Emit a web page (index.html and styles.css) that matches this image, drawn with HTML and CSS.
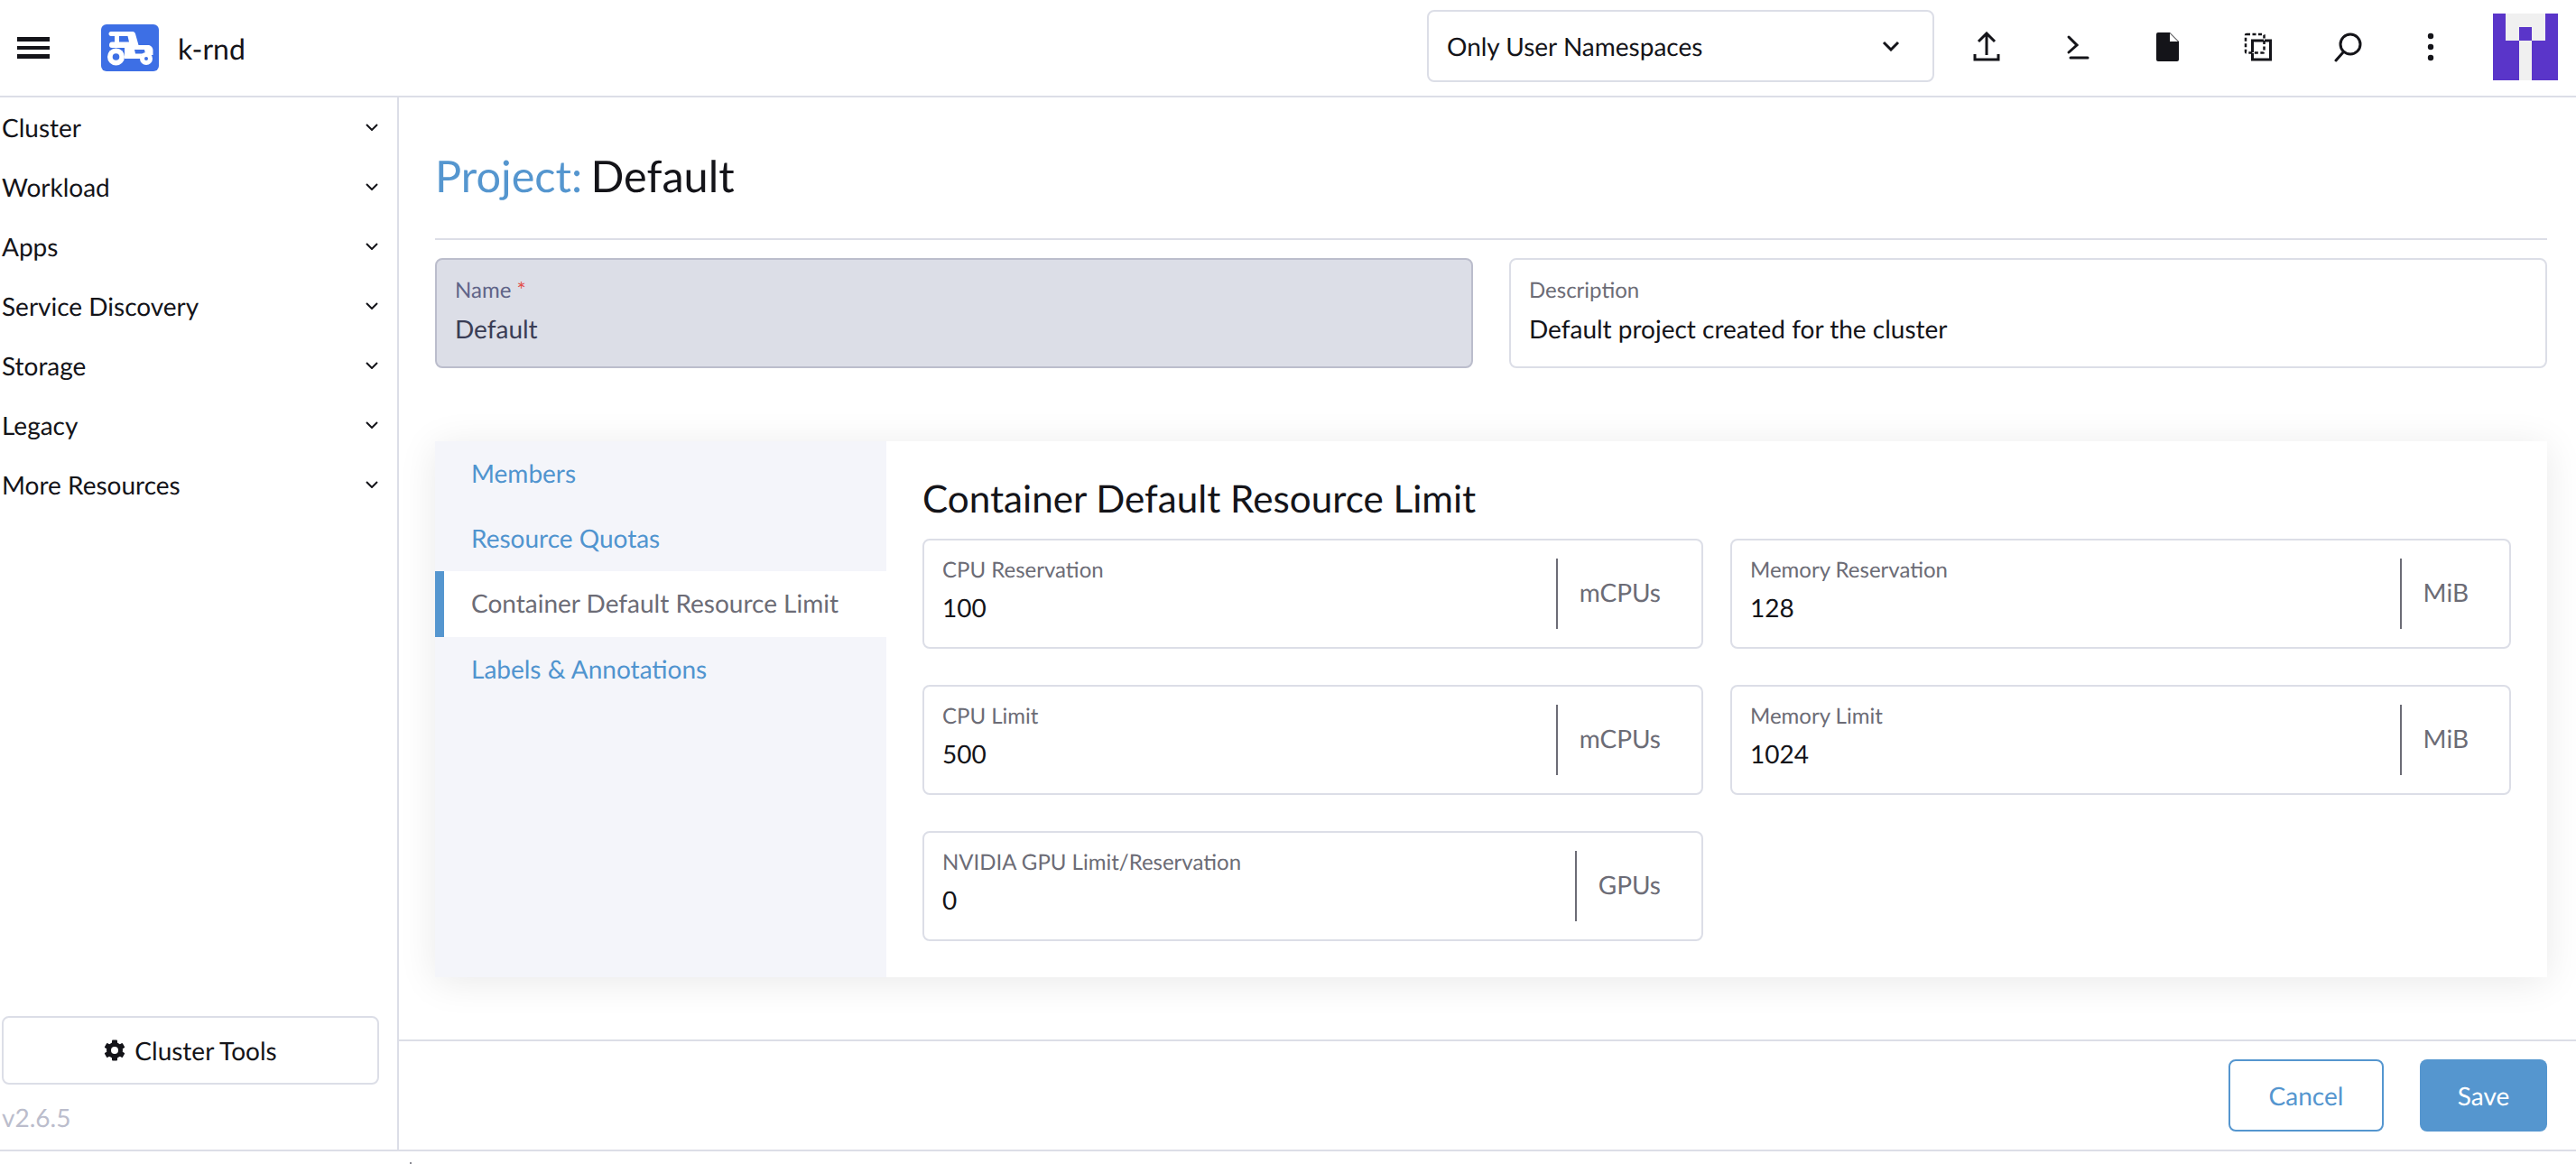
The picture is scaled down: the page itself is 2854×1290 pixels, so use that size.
FILE: index.html
```html
<!DOCTYPE html>
<html lang="en">

<head>
    <meta charset="UTF-8">
    <meta name="viewport" content="width=device-width, initial-scale=1.0">
    <title>Project: Default</title>
    <link rel="stylesheet" href="styles.css">
</head>

<body>
    <div class="app">
        <header class="topbar">
            <div class="brand">
                <svg class="burger" width="36" height="24" viewBox="0 0 36 24"><path d="M0 0h36v5H0zM0 10h36v4H0zM0 19h36v5H0z" fill="#141419"/></svg>
                <svg class="cluster-logo" width="64" height="52" viewBox="0 0 64 52">
                    <rect width="64" height="52" rx="6" fill="#3d6fe5"/>
                    <path fill-rule="evenodd" d="M11 8h24c1.500 0 2.500 1 3 2.500L41.500 23H52c3 0 5.500 2.500 5.500 5.500V34H44v4H26V26H12c-2 0-3-1-3-3s1-3.500 3-3.500h3V13h-4c-1.500 0-2.500-1-2.500-2.500S9.500 8 11 8zM20 13v6.500h11L29.500 13zM37 28l1 4.500h11l-1-4.500z" fill="#fff"/>
                    <circle cx="16.500" cy="36" r="9.500" fill="#fff"/><circle cx="16.500" cy="36" r="3.800" fill="#3d6fe5"/>
                    <circle cx="50" cy="38" r="7" fill="#fff"/><circle cx="50" cy="38" r="2" fill="#3d6fe5"/>
                </svg>
                <span class="cluster-name">k-rnd</span>
            </div>
            <div class="ns-select">
                <span>Only User Namespaces</span>
                <svg width="20" height="12" viewBox="0 0 20 12"><path d="M2 2l8 8 8-8" fill="none" stroke="#141419" stroke-width="3"/></svg>
            </div>
            <div class="tools">
                <span class="tool"><svg width="32" height="34" viewBox="0 0 32 34"><path d="M16 26V3M7 11l9-9 9 9M3 25v6h26v-6" fill="none" stroke="#141419" stroke-width="3"/></svg></span>
                <span class="tool"><svg width="32" height="34" viewBox="0 0 32 34"><path d="M7 6l9 9-9 8M9 29h19" fill="none" stroke="#141419" stroke-width="3" stroke-linecap="round"/></svg></span>
                <span class="tool"><svg width="32" height="34" viewBox="0 0 32 34"><path d="M6 1h13l10 10v20a2 2 0 0 1-2 2H6a2 2 0 0 1-2-2V3a2 2 0 0 1 2-2z" fill="#141419"/><path d="M19 2v9h9z" fill="#fff"/></svg></span>
                <span class="tool"><svg width="32" height="34" viewBox="0 0 32 34"><rect x="10.500" y="10" width="20" height="21" fill="none" stroke="#141419" stroke-width="3"/><rect x="3" y="3" width="20.500" height="20.500" rx="1" fill="none" stroke="#fff" stroke-width="1"/><rect x="3" y="3" width="20.500" height="20.500" rx="1" fill="none" stroke="#141419" stroke-width="2.500" stroke-dasharray="4 2.500"/></svg></span>
                <span class="tool"><svg width="32" height="34" viewBox="0 0 32 34"><circle cx="19" cy="14" r="11" fill="none" stroke="#141419" stroke-width="3"/><path d="M11 23l-8 9" stroke="#141419" stroke-width="3" stroke-linecap="round"/></svg></span>
                <span class="tool tool-kebab"><svg width="8" height="34" viewBox="0 0 8 34"><circle cx="4" cy="5" r="3.200" fill="#141419"/><circle cx="4" cy="17" r="3.200" fill="#141419"/><circle cx="4" cy="29" r="3.200" fill="#141419"/></svg></span>
            </div>
            <svg class="avatar" width="72" height="74" viewBox="0 0 72 74">
                <rect width="72" height="74" fill="#5a35c9"/>
                <path d="M14 0h44v30H43v44H29V30H14z" fill="#f0f0f0"/>
                <rect x="29" y="15" width="14" height="15" fill="#5a35c9"/>
            </svg>
        </header>

        <aside class="sidebar">
            <nav class="side-nav">
                <div class="nav-item"><span>Cluster</span><svg class="chev" width="14" height="8" viewBox="0 0 14 8"><path d="M1 1l6 6 6-6" fill="none" stroke="#141419" stroke-width="2"/></svg></div>
                <div class="nav-item"><span>Workload</span><svg class="chev" width="14" height="8" viewBox="0 0 14 8"><path d="M1 1l6 6 6-6" fill="none" stroke="#141419" stroke-width="2"/></svg></div>
                <div class="nav-item"><span>Apps</span><svg class="chev" width="14" height="8" viewBox="0 0 14 8"><path d="M1 1l6 6 6-6" fill="none" stroke="#141419" stroke-width="2"/></svg></div>
                <div class="nav-item"><span>Service Discovery</span><svg class="chev" width="14" height="8" viewBox="0 0 14 8"><path d="M1 1l6 6 6-6" fill="none" stroke="#141419" stroke-width="2"/></svg></div>
                <div class="nav-item"><span>Storage</span><svg class="chev" width="14" height="8" viewBox="0 0 14 8"><path d="M1 1l6 6 6-6" fill="none" stroke="#141419" stroke-width="2"/></svg></div>
                <div class="nav-item"><span>Legacy</span><svg class="chev" width="14" height="8" viewBox="0 0 14 8"><path d="M1 1l6 6 6-6" fill="none" stroke="#141419" stroke-width="2"/></svg></div>
                <div class="nav-item"><span>More Resources</span><svg class="chev" width="14" height="8" viewBox="0 0 14 8"><path d="M1 1l6 6 6-6" fill="none" stroke="#141419" stroke-width="2"/></svg></div>
            </nav>
            <div class="side-bottom">
                <button class="tools-btn" type="button">
                    <svg width="24" height="24" viewBox="0 0 24 24">
                        <g fill="#141419">
                            <circle cx="12" cy="12" r="9"/>
                            <rect x="9" y="0.500" width="6" height="23" rx="1"/>
                            <rect x="9" y="0.500" width="6" height="23" rx="1" transform="rotate(60 12 12)"/>
                            <rect x="9" y="0.500" width="6" height="23" rx="1" transform="rotate(120 12 12)"/>
                        </g>
                        <circle cx="12" cy="12" r="4" fill="#fff"/>
                    </svg>
                    Cluster Tools
                </button>
                <div class="version">v2.6.5</div>
            </div>
        </aside>

        <main class="main">
            <div class="content">
                <h1 class="page-title"><span class="title-type">Project:</span> Default</h1>
                <div class="name-row">
                    <div class="field field-disabled">
                        <label class="field-label">Name <span class="req">*</span></label>
                        <div class="field-value">Default</div>
                    </div>
                    <div class="field">
                        <label class="field-label">Description</label>
                        <div class="field-value">Default project created for the cluster</div>
                    </div>
                </div>

                <section class="tabbed">
                    <ul class="tabs">
                        <li class="tab">Members</li>
                        <li class="tab">Resource Quotas</li>
                        <li class="tab tab-active">Container Default Resource Limit</li>
                        <li class="tab">Labels &amp; Annotations</li>
                    </ul>
                    <div class="tab-body">
                        <h3 class="tab-title">Container Default Resource Limit</h3>
                        <div class="limit-grid">
                            <div class="field field-unit">
                                <div class="unit-main">
                                    <label class="field-label">CPU Reservation</label>
                                    <div class="field-value">100</div>
                                </div>
                                <div class="unit">mCPUs</div>
                            </div>
                            <div class="field field-unit">
                                <div class="unit-main">
                                    <label class="field-label">Memory Reservation</label>
                                    <div class="field-value">128</div>
                                </div>
                                <div class="unit">MiB</div>
                            </div>
                            <div class="field field-unit">
                                <div class="unit-main">
                                    <label class="field-label">CPU Limit</label>
                                    <div class="field-value">500</div>
                                </div>
                                <div class="unit">mCPUs</div>
                            </div>
                            <div class="field field-unit">
                                <div class="unit-main">
                                    <label class="field-label">Memory Limit</label>
                                    <div class="field-value">1024</div>
                                </div>
                                <div class="unit">MiB</div>
                            </div>
                            <div class="field field-unit">
                                <div class="unit-main">
                                    <label class="field-label">NVIDIA GPU Limit/Reservation</label>
                                    <div class="field-value">0</div>
                                </div>
                                <div class="unit">GPUs</div>
                            </div>
                        </div>
                    </div>
                </section>
            </div>

            <footer class="actions">
                <button class="btn btn-cancel" type="button">Cancel</button>
                <button class="btn btn-save" type="button">Save</button>
            </footer>
        </main>

        <div class="page-foot"><span class="foot-mark"></span></div>
    </div>
</body>

</html>
```

FILE: styles.css
```css
* {
    box-sizing: border-box;
}

body {
    margin: 0;
    background-color: white;
    color: #141419;
    font-family: Lato, "Open Sans", sans-serif;
    font-size: 28px;
    text-rendering: geometricPrecision;
}

.app {
    display: grid;
    grid-template-columns: 442px 1fr;
    grid-template-rows: 108px 1166px 16px;
    height: 1290px;
    overflow: hidden;
}

/* top bar */
.topbar {
    grid-column: 1 / 3;
    display: flex;
    align-items: center;
    height: 108px;
    border-bottom: 2px solid #dcdee7;
    padding-left: 19px;
    padding-right: 20px;
}

.brand {
    display: flex;
    align-items: center;
    flex: 1;
}

.burger {
    margin-right: 57px;
}

.cluster-logo {
    margin-right: 21px;
}

.cluster-name {
    font-size: 32px;
}

.ns-select {
    display: flex;
    align-items: center;
    justify-content: space-between;
    width: 562px;
    height: 80px;
    margin-top: -4px;
    padding: 0 36px 0 20px;
    border: 2px solid #dcdee7;
    border-radius: 8px;
}

.tools {
    display: flex;
    align-items: center;
    margin-left: 8px;
}

.tool {
    display: flex;
    justify-content: center;
    width: 100px;
    margin-top: -2px;
}

.tool-kebab {
    width: 80px;
    padding-left: 4px;
}

.avatar {
    margin-left: 31px;
    margin-top: -2px;
}

/* sidebar */
.sidebar {
    display: flex;
    flex-direction: column;
    justify-content: space-between;
    border-right: 2px solid #dcdee7;
}

.nav-item {
    display: flex;
    align-items: center;
    justify-content: space-between;
    height: 66px;
    padding-left: 2px;
    padding-right: 21px;
}

.side-bottom {
    padding-left: 2px;
    padding-right: 20px;
}

.tools-btn {
    display: flex;
    align-items: center;
    justify-content: center;
    gap: 10px;
    width: 418px;
    height: 76px;
    background-color: white;
    border: 2px solid #dcdee7;
    border-radius: 8px;
    color: #141419;
    font-family: inherit;
    font-size: 28px;
    text-rendering: geometricPrecision;
}

.version {
    height: 72px;
    padding-top: 19px;
    color: #bbbdcc;
    font-size: 28px;
    line-height: 34px;
}

/* main area */
.main {
    display: flex;
    flex-direction: column;
    justify-content: space-between;
}

.content {
    padding: 0 32px 0 40px;
}

.page-title {
    height: 158px;
    margin: 0 0 20px;
    padding-top: 58px;
    border-bottom: 2px solid #dcdee7;
    font-size: 48.600px;
    font-weight: 400;
    line-height: 58px;
    word-spacing: -3px;
}

.title-type {
    color: #5596cf;
}

.name-row {
    display: grid;
    grid-template-columns: 1150px 1150px;
    justify-content: space-between;
}

.field {
    height: 122px;
    padding: 20px 20px 0;
    border: 2px solid #dcdee7;
    border-radius: 8px;
    background-color: white;
}

.field-disabled {
    background-color: #dcdee7;
    border-color: #bbbdcc;
}

.field-label {
    display: block;
    color: #6c6c76;
    font-size: 24px;
    line-height: 28px;
}

.field-disabled .field-label {
    color: #5f6488;
}

.req {
    color: #e2504c;
}

.field-value {
    margin-top: 11px;
    font-size: 28px;
    line-height: 34px;
}

.field-disabled .field-value {
    color: #3a3d55;
}

/* tabs */
.tabbed {
    display: flex;
    height: 594px;
    margin-top: 81px;
    box-shadow: 0 5px 40px rgba(0, 0, 0, 0.09);
}

.tabs {
    width: 500px;
    margin: 0;
    padding: 0;
    list-style: none;
    background-color: #f4f5fa;
}

.tab {
    height: 72px;
    padding-left: 40px;
    color: #5094cf;
    line-height: 71px;
}

.tab-active {
    height: 73px;
    background-color: white;
    border-left: 10px solid #5596cf;
    padding-left: 30px;
    color: #6c6c76;
}

.tab-body {
    flex: 1;
    padding: 0 40px;
    background-color: white;
}

.tab-title {
    height: 108px;
    margin: 0;
    padding-top: 38px;
    font-size: 42.200px;
    font-weight: 400;
    line-height: 50px;
}

.limit-grid {
    display: grid;
    grid-template-columns: 865px 865px;
    column-gap: 30px;
    row-gap: 40px;
}

.field-unit {
    display: flex;
    align-items: flex-start;
    padding: 19px 0 0 20px;
}

.field-unit .field-value {
    margin-top: 10px;
}

.unit-main {
    flex: 1;
}

.unit {
    height: 78px;
    margin-top: 1px;
    padding: 0 45px 0 24px;
    border-left: 2px solid #6c6c76;
    color: #6c6c76;
    line-height: 74px;
}

/* bottom buttons */
.actions {
    display: flex;
    justify-content: flex-end;
    gap: 40px;
    height: 122px;
    padding: 20px 32px 0 0;
    border-top: 2px solid #dcdee7;
}

.btn {
    height: 80px;
    border-radius: 8px;
    font-family: inherit;
    font-size: 28px;
    text-rendering: geometricPrecision;
}

.btn-cancel {
    width: 172px;
    background-color: white;
    border: 2px solid #5596cf;
    color: #5596cf;
}

.btn-save {
    width: 141px;
    background-color: #5596cf;
    border: 0;
    color: white;
}

.page-foot {
    grid-column: 1 / 3;
    border-top: 2px solid #dcdee7;
    padding-left: 454px;
    padding-top: 12px;
}

.foot-mark {
    display: block;
    width: 2px;
    height: 2px;
    background-color: #8a8a92;
}
```
